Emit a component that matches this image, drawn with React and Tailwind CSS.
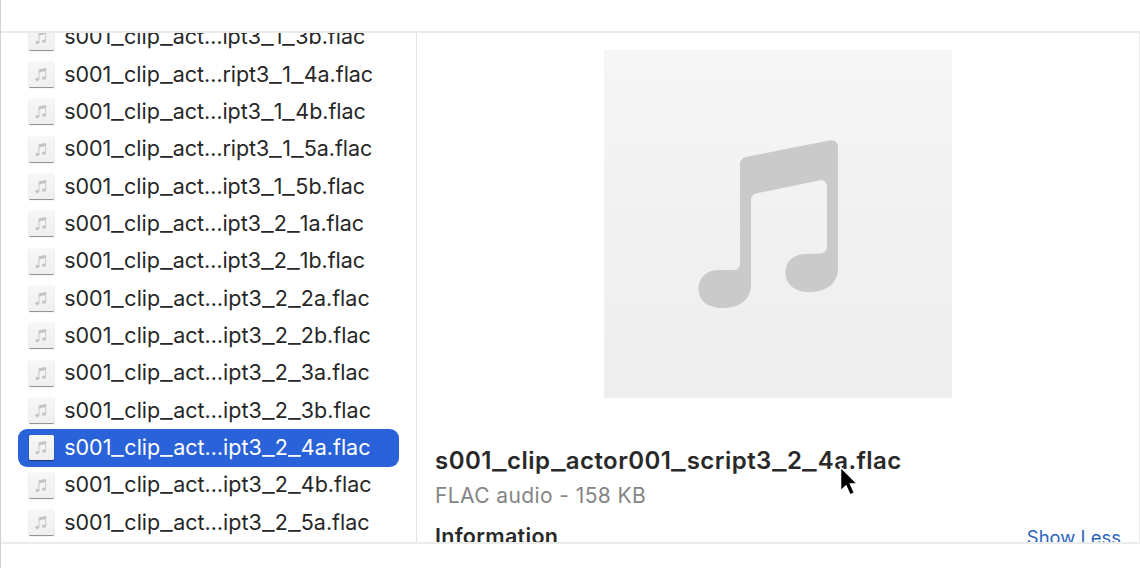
import React from "react";

function Note({ className }) {
  return (
    <svg viewBox="0 0 348 348" className={className} aria-hidden="true">
      <path
        fill="currentColor"
        fillRule="evenodd"
        d="M136 114Q136 108.500 142 107L225 90.500Q234 89 234 98V218C234 233 223 242 206 242C190 242 181.500 234 181.500 222.500C181.500 211 190 204 202 204L217 203.500Q223 202.500 223 196V138Q223 129 215 130.500L152 143.500Q147 145 147 150V235C147 249 136 258 119 258C103 258 94.500 250 94.500 239C94.500 227 103 220 115 220L130 220Q136 219.500 136 213Z"
      />
    </svg>
  );
}

// File name with wide underscores
function FileName({ text }) {
  return text.split(/(_)/).map((part, i) =>
    part === "_" ? (
      <span key={i} className="mr-[0.145em] inline-block origin-left scale-x-[1.300]">
        _
      </span>
    ) : (
      <span key={i}>{part}</span>
    )
  );
}

const files = [
  ["s001_clip_act…ipt3_1_3b.flac"],
  ["s001_clip_act…ript3_1_4a.flac"],
  ["s001_clip_act…ipt3_1_4b.flac"],
  ["s001_clip_act…ript3_1_5a.flac"],
  ["s001_clip_act…ipt3_1_5b.flac"],
  ["s001_clip_act…ipt3_2_1a.flac"],
  ["s001_clip_act…ipt3_2_1b.flac"],
  ["s001_clip_act…ipt3_2_2a.flac"],
  ["s001_clip_act…ipt3_2_2b.flac"],
  ["s001_clip_act…ipt3_2_3a.flac"],
  ["s001_clip_act…ipt3_2_3b.flac"],
  ["s001_clip_act…ipt3_2_4a.flac", true],
  ["s001_clip_act…ipt3_2_4b.flac"],
  ["s001_clip_act…ipt3_2_5a.flac"],
];

function FileRow({ name, selected }) {
  return (
    <li
      className={
        "flex h-[37.350px] shrink-0 items-center rounded-[9px] pl-[11.200px] " +
        (selected ? "bg-[#2962d9] text-white" : "text-[#272727]")
      }
    >
      <span className="flex size-[25px] shrink-0 items-center justify-center rounded-[1.500px] bg-linear-to-b from-[#f7f7f7] to-[#efefef] shadow-[0_1px_1px_rgba(0,0,0,0.45),0_0_1px_rgba(0,0,0,0.25)]">
        <Note className="size-[27px] shrink-0 text-[#c4c4c4]" />
      </span>
      <span
        className={
          "ml-[10px] pb-[2px] whitespace-nowrap text-[21.500px] leading-[26px] " +
          (/_1_|_1[ab]/.test(name) ? "tracking-[-0.050px]" : "tracking-[0px]")
        }
      >
        <FileName text={name} />
      </span>
    </li>
  );
}

export default function App() {
  return (
    <div className="flex h-[568px] w-[1140px] flex-col overflow-hidden border-l border-[#d4d2cf] bg-white pt-[31px] font-['Inter','Liberation_Sans',sans-serif]">
      <div className="flex h-[513px] w-full overflow-hidden border-t-2 border-b-2 border-[#ebebeb]">
        <ul className="flex h-full w-[416px] shrink-0 flex-col justify-end overflow-hidden border-r border-[#e3e3e3] pr-[17px] pb-[0.700px] pl-[17px]">
          {files.map(([name, selected]) => (
            <FileRow key={name} name={name} selected={selected} />
          ))}
        </ul>
        <section className="relative flex min-w-0 flex-1 flex-col border-r border-[#e9e9e9] pt-[17px] pr-[18px] pl-[18px]">
          <div className="ml-[169px] size-[348px] shrink-0 bg-linear-to-b from-[#f6f6f6] via-[#f1f1f1] to-[#eeeeee]">
            <Note className="size-full text-[#cacaca]" />
          </div>
          <h1 className="mt-[48px] whitespace-nowrap text-[24px] leading-[30px] font-semibold tracking-[0.470px] text-[#292929]">
            <FileName text="s001_clip_actor001_script3_2_4a.flac" />
          </h1>
          <p className="mt-[7px] text-[21px] leading-[26px] tracking-[0.400px] whitespace-nowrap text-[#858585]">FLAC audio - 158 KB</p>
          <div className="mt-[13px] flex shrink-0 items-start justify-between">
            <h2 className="text-[21.500px] leading-[28px] font-semibold tracking-[0.300px] text-[#292929]">Information</h2>
            <button className="pt-px text-[18.400px] leading-[28px] text-[#2d65bd]">Show Less</button>
          </div>
          <svg className="absolute top-[432px] left-[420px] h-[36px] w-[24px]" viewBox="0 0 24 36" aria-hidden="true">
            <path d="M3.500 2V26L9 21L13 30L17.500 28L13.500 19H20.500Z" fill="#000" stroke="#fff" strokeWidth="1.500" />
          </svg>
        </section>
      </div>
    </div>
  );
}
